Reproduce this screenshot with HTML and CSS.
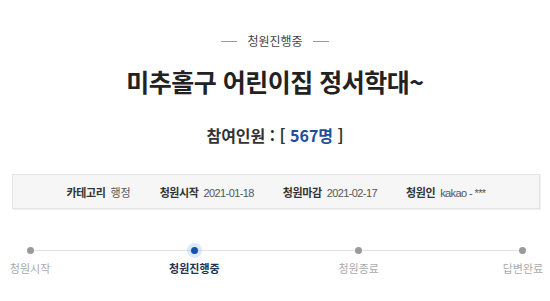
FILE: index.html
```html
<!DOCTYPE html>
<html lang="ko">
<head>
<meta charset="utf-8">
<link rel="stylesheet" href="styles.css">
</head>
<body>
<div class="page">
  <div class="status"><span class="rule"></span><span class="status-text">청원진행중</span><span class="rule"></span></div>
  <h1 class="title">미추홀구 어린이집 정서학대~</h1>
  <div class="count">참여인원 : [ <span class="num">567명</span> ]</div>
  <div class="info">
    <div class="item"><span class="key">카테고리</span><span class="val">행정</span></div>
    <div class="item"><span class="key">청원시작</span><span class="val num-val">2021-01-18</span></div>
    <div class="item"><span class="key">청원마감</span><span class="val num-val">2021-02-17</span></div>
    <div class="item"><span class="key">청원인</span><span class="val num-val">kakao - ***</span></div>
  </div>
  <div class="steps">
    <div class="track"></div>
    <div class="step"><span class="dot"></span><span class="label">청원시작</span></div>
    <div class="step active"><span class="dot"></span><span class="label">청원진행중</span></div>
    <div class="step"><span class="dot"></span><span class="label">청원종료</span></div>
    <div class="step"><span class="dot"></span><span class="label">답변완료</span></div>
  </div>
</div>
</body>
</html>
```
FILE: styles.css
```css
html, body {
  margin: 0;
  padding: 0;
  background: #fff;
  font-family: "Noto Sans CJK KR", "Noto Sans", sans-serif;
  color: #333;
}
.page {
  padding-top: 32px;
}
.status {
  display: flex;
  justify-content: center;
  align-items: center;
  gap: 10px;
  height: 18px;
}
.rule {
  width: 16px;
  height: 1px;
  background: #999;
}
.status-text {
  font-size: 12px;
  line-height: 18px;
  color: #444;
}
.title {
  margin: 13px 0 0;
  text-align: center;
  font-size: 25px;
  line-height: 36px;
  font-weight: 700;
  color: #222;
  letter-spacing: -0.5px;
}
.count {
  margin-top: 24px;
  text-align: center;
  font-size: 16px;
  line-height: 24px;
  font-weight: 700;
  color: #333;
}
.num {
  color: #1d4e9e;
}
.info {
  margin: 27px 10px 0 12px;
  height: 33px;
  background: #f6f6f6;
  border: 1px solid #e4e4e4;
  box-shadow: 1px 1px 1px rgba(0,0,0,0.06);
  display: flex;
  justify-content: center;
  align-items: center;
  gap: 29px;
  font-size: 11px;
}
.item {
  display: flex;
  align-items: baseline;
  gap: 5px;
}
.key {
  font-weight: 700;
  color: #333;
  letter-spacing: -0.4px;
}
.val {
  color: #555;
}
.num-val {
  font-family: "Liberation Sans Narrow", "Liberation Sans", sans-serif;
  font-size: 11px;
  letter-spacing: -0.6px;
}
.steps {
  position: relative;
  margin: 32px 7px 0 10px;
  display: flex;
  justify-content: space-between;
}
.track {
  position: absolute;
  left: 20px;
  right: 20px;
  top: 9px;
  height: 1px;
  background: #e2e2e2;
}
.step {
  position: relative;
  width: 40px;
  display: flex;
  flex-direction: column;
  align-items: center;
}
.dot {
  width: 7px;
  height: 7px;
  margin-top: 6px;
  border-radius: 50%;
  background: #9a9a9a;
}
.active .dot {
  background: #1550b0;
  box-shadow: 0 0 0 4px rgba(60, 140, 230, 0.18);
}
.label {
  margin-top: 6px;
  font-size: 11px;
  line-height: 16px;
  color: #aaa;
  white-space: nowrap;
}
.active .label {
  color: #223355;
  font-weight: 700;
}
```
